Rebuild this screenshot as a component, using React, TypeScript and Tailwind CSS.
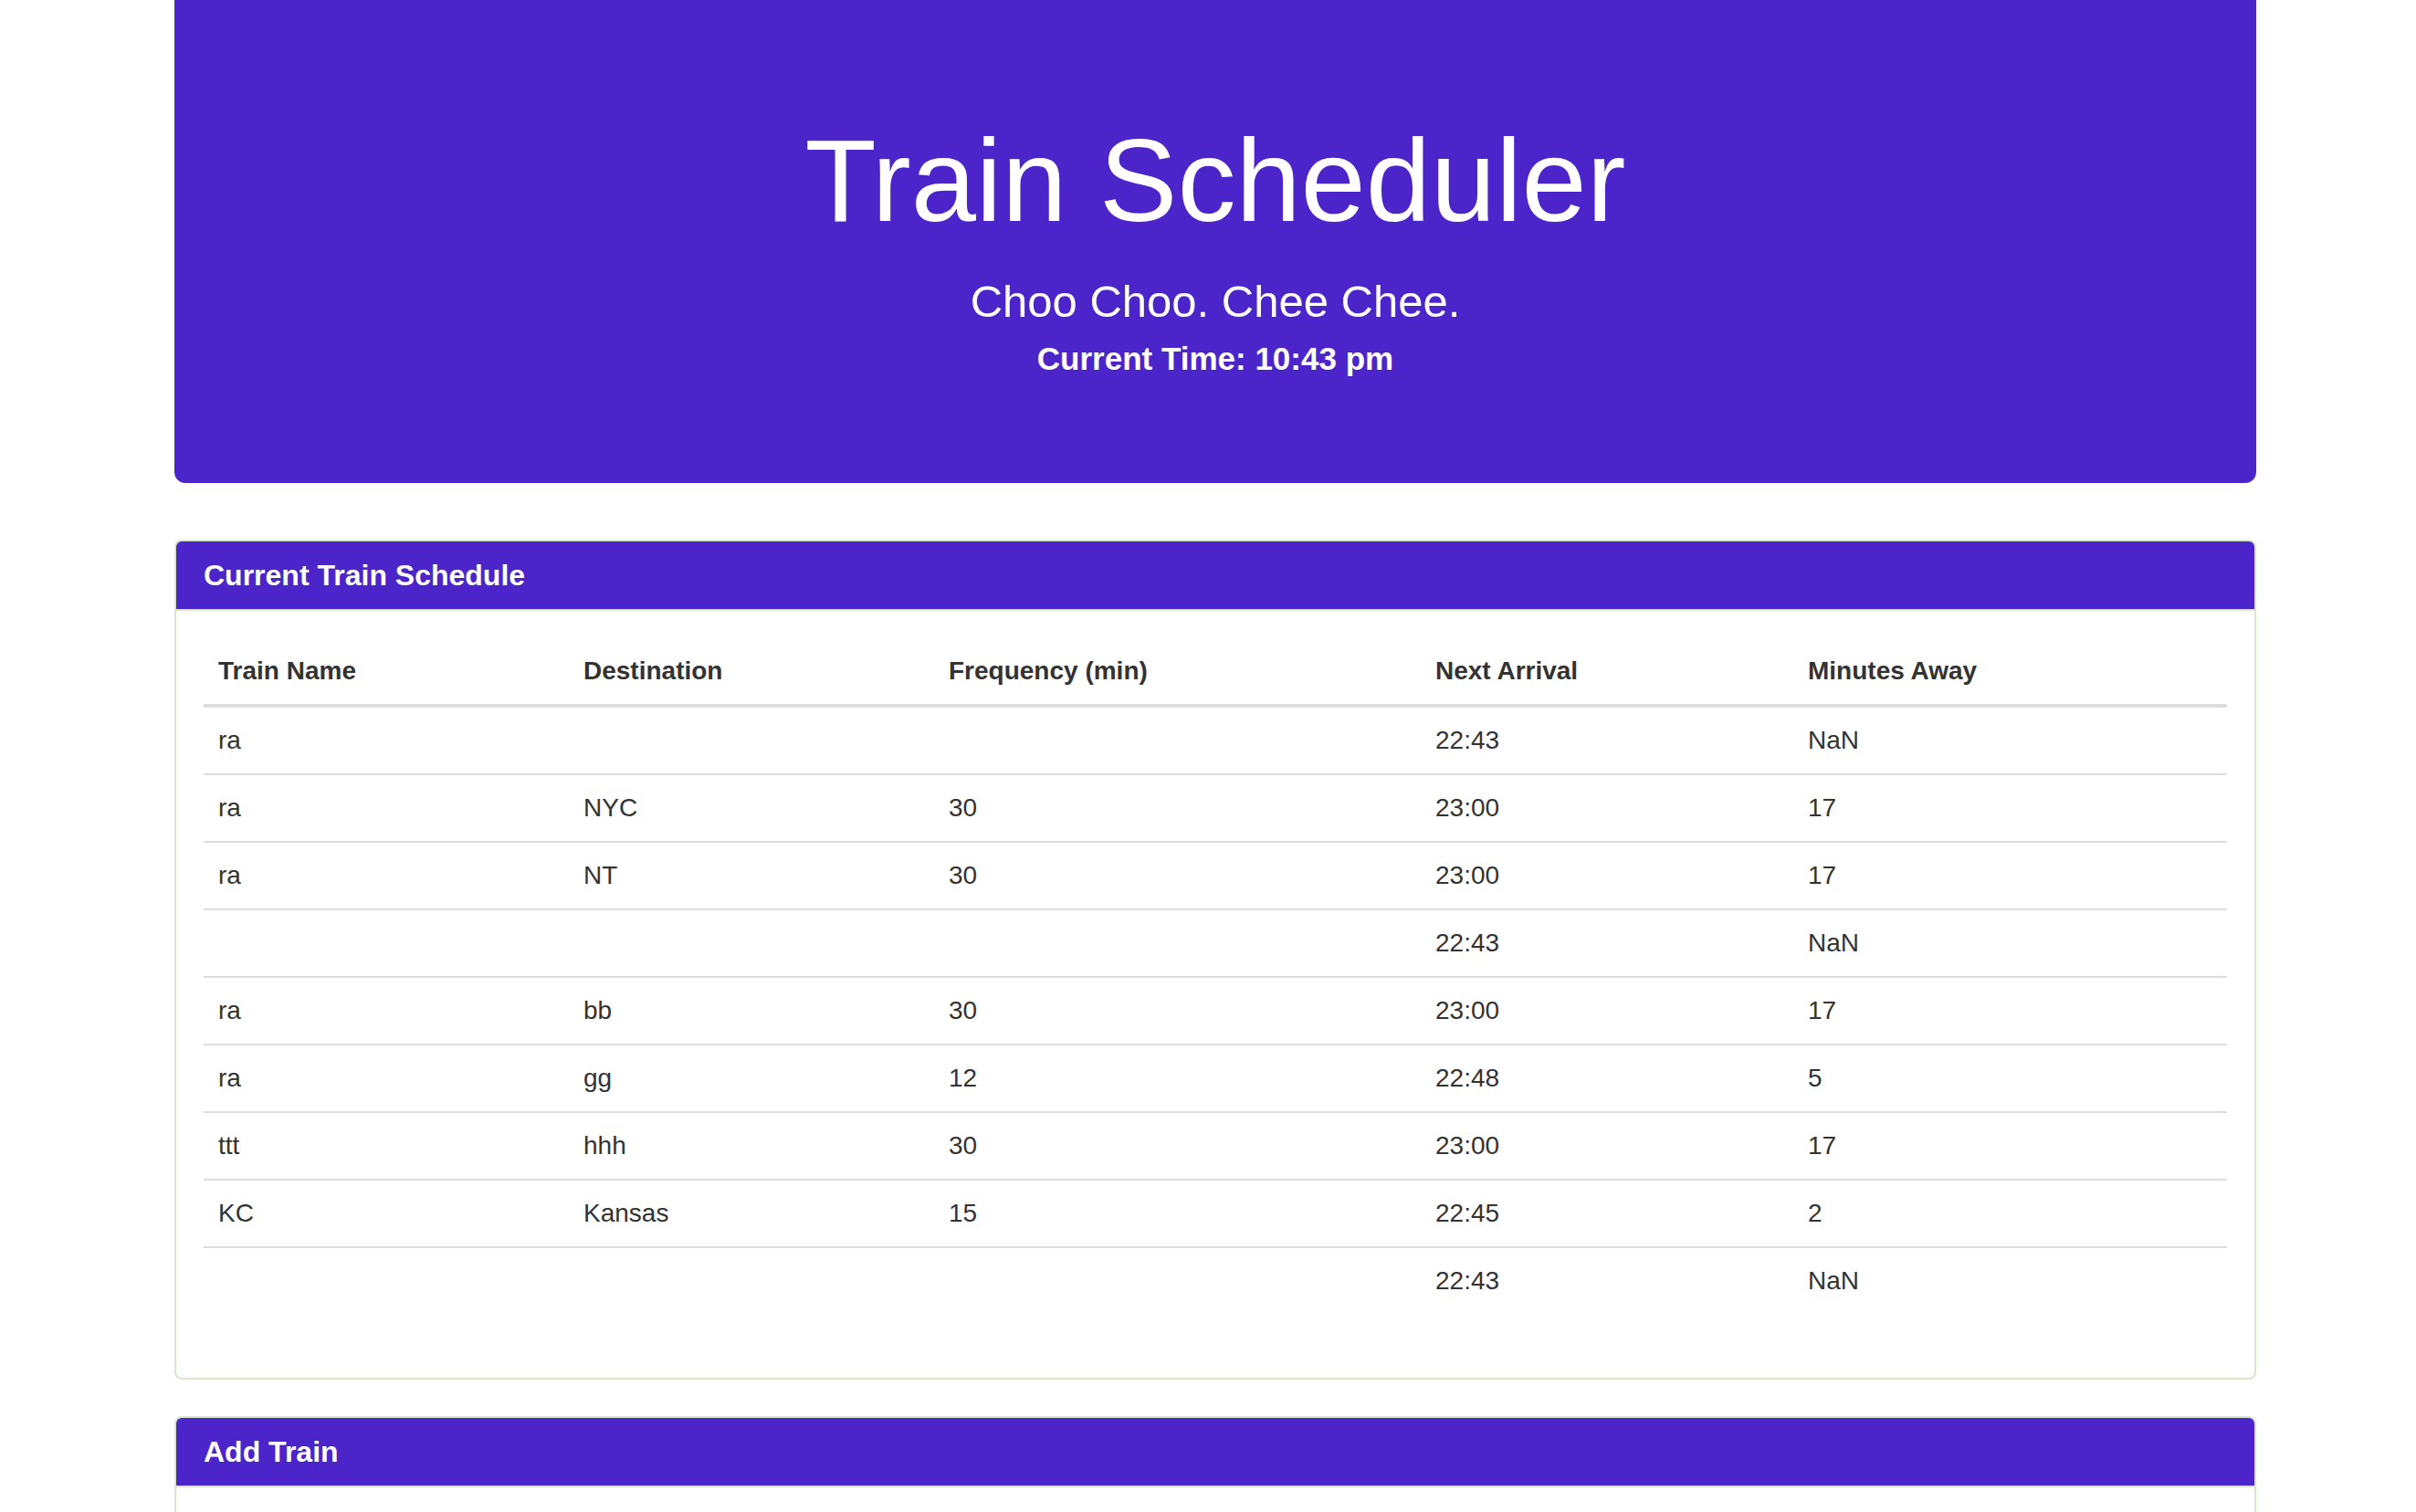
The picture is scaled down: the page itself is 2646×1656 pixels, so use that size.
import React from 'react';

type Train = {
  name: string;
  destination: string;
  frequency: string;
  nextArrival: string;
  minutesAway: string;
};

const trains: Train[] = [
  { name: 'ra', destination: '', frequency: '', nextArrival: '22:43', minutesAway: 'NaN' },
  { name: 'ra', destination: 'NYC', frequency: '30', nextArrival: '23:00', minutesAway: '17' },
  { name: 'ra', destination: 'NT', frequency: '30', nextArrival: '23:00', minutesAway: '17' },
  { name: '', destination: '', frequency: '', nextArrival: '22:43', minutesAway: 'NaN' },
  { name: 'ra', destination: 'bb', frequency: '30', nextArrival: '23:00', minutesAway: '17' },
  { name: 'ra', destination: 'gg', frequency: '12', nextArrival: '22:48', minutesAway: '5' },
  { name: 'ttt', destination: 'hhh', frequency: '30', nextArrival: '23:00', minutesAway: '17' },
  { name: 'KC', destination: 'Kansas', frequency: '15', nextArrival: '22:45', minutesAway: '2' },
  { name: '', destination: '', frequency: '', nextArrival: '22:43', minutesAway: 'NaN' },
];

const columns = ['Train Name', 'Destination', 'Frequency (min)', 'Next Arrival', 'Minutes Away'];

const Panel: React.FC<{ title: string; children: React.ReactNode }> = ({ title, children }) => (
  <div className="mb-[40px] bg-white border-2 border-[#d6e9c6] rounded-[8px]">
    <div className="bg-[#4b25ca] rounded-t-[6px] border-b-2 border-[#d6e9c6] px-[30px] py-[20px]">
      <h3 className="text-[32px] leading-[34px] font-bold text-white">{title}</h3>
    </div>
    {children}
  </div>
);

export default function App() {
  return (
    <div className="min-h-screen bg-white text-[#333] font-['Liberation_Sans',Arial,sans-serif]">
      <div className="ml-[191px] w-[2280px]">
        {/* Jumbotron */}
        <div className="h-[529px] bg-[#4b25ca] rounded-b-[12px] mb-[62px] pt-[128px] text-white text-center flex flex-col items-center">
          <h1 className="text-[128px] leading-[140px] font-normal">Train Scheduler</h1>
          <h3 className="mt-[36px] text-[49px] leading-[53px] font-normal">Choo Choo. Chee Chee.</h3>
          <h4 className="mt-[16px] text-[35px] leading-[40px] font-bold">Current Time: 10:43 pm</h4>
        </div>

        {/* Schedule */}
        <Panel title="Current Train Schedule">
          <div className="p-[30px]">
            <table className="w-full table-fixed mb-[40px] text-[28px] leading-[40px]">
              <colgroup>
                <col className="w-[400px]" />
                <col className="w-[400px]" />
                <col className="w-[533px]" />
                <col className="w-[408px]" />
                <col />
              </colgroup>
              <thead>
                <tr>
                  {columns.map((c) => (
                    <th key={c} className="text-left font-bold px-[16px] py-[16px] border-b-4 border-[#ddd]">
                      {c}
                    </th>
                  ))}
                </tr>
              </thead>
              <tbody>
                {trains.map((t, i) => {
                  const border = i === 0 ? 'border-t-0' : 'border-t-2 border-[#ddd]';
                  return (
                    <tr key={i}>
                      <td className={`px-[16px] py-[16px] ${border}`}>{t.name}</td>
                      <td className={`px-[16px] py-[16px] ${border}`}>{t.destination}</td>
                      <td className={`px-[16px] py-[16px] ${border}`}>{t.frequency}</td>
                      <td className={`px-[16px] py-[16px] ${border}`}>{t.nextArrival}</td>
                      <td className={`px-[16px] py-[16px] ${border}`}>{t.minutesAway}</td>
                    </tr>
                  );
                })}
              </tbody>
            </table>
          </div>
        </Panel>

        {/* Add train panel: its body lies below the fold */}
        <Panel title="Add Train">
          <div className="h-[400px] p-[30px]" />
        </Panel>
      </div>
    </div>
  );
}
